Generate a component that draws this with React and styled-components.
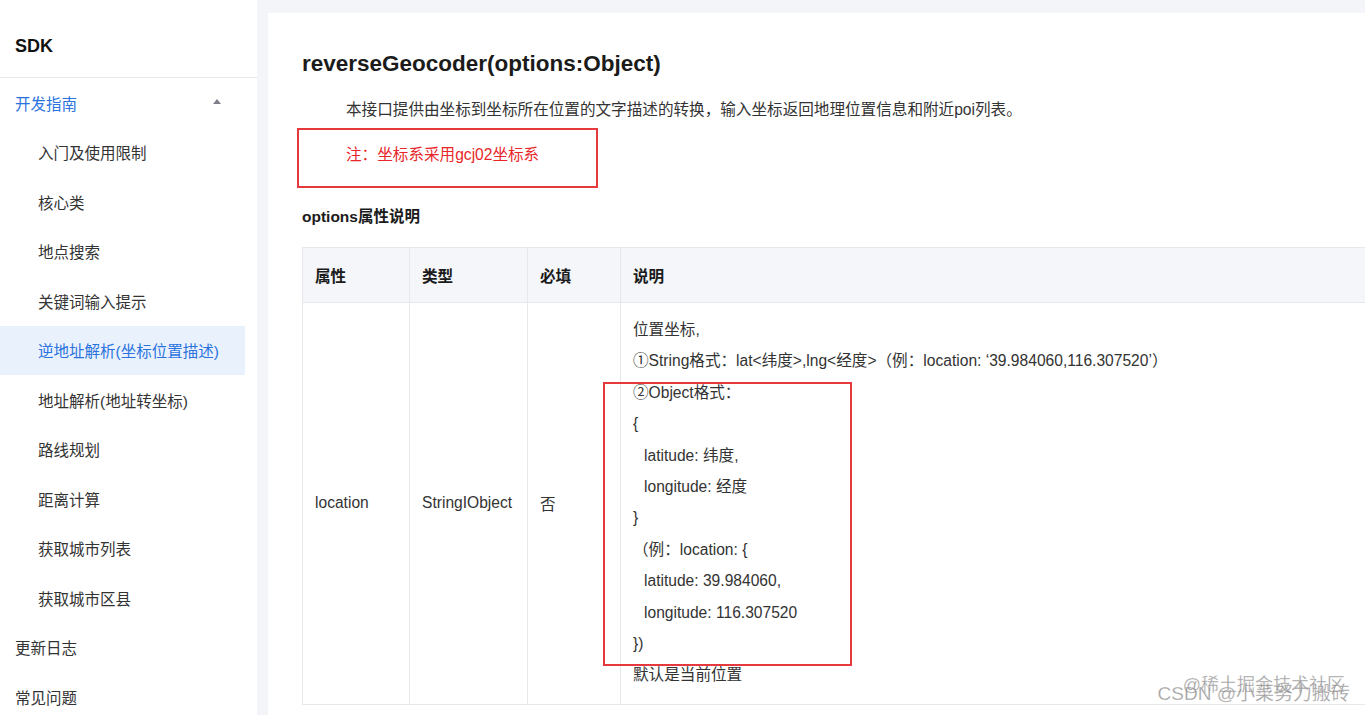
import React from "react";
import styled, { createGlobalStyle } from "styled-components";

const GlobalStyle = createGlobalStyle`
  html, body {
    margin: 0;
    padding: 0;
    overflow: hidden;
    background: #fff;
  }
  body {
    font-family: "Liberation Sans", "Noto Sans CJK SC", sans-serif;
    color: #333;
  }
`;

const Page = styled.div`
  display: flex;
  width: 1365px;
  height: 715px;
  overflow: hidden;
  position: relative;
`;

// ---------- sidebar ----------
const Sidebar = styled.aside`
  width: 257px;
  flex-shrink: 0;
  background: #fff;
  display: flex;
  flex-direction: column;
  overflow: hidden;
`;

const Brand = styled.div`
  flex-shrink: 0;
  height: 78px;
  display: flex;
  align-items: center;
  padding: 16px 0 0 15px;
  font-size: 18px;
  font-weight: bold;
  color: #111;
  border-bottom: 1px solid #e6e8eb;
  box-sizing: border-box;
`;

const Menu = styled.ul`
  list-style: none;
  margin: 0;
  padding: 0;
  width: 245px;
  flex-shrink: 0;
`;

const MenuItem = styled.li`
  height: 49.5px;
  display: flex;
  align-items: center;
  justify-content: space-between;
  padding-left: ${(p) => (p.$sub ? "38px" : "15px")};
  padding-right: 24px;
  font-size: 15.5px;
  color: ${(p) => (p.$blue || p.$active ? "#2a73de" : "#333")};
  background: ${(p) => (p.$active ? "#e9f1fd" : "transparent")};
  box-sizing: border-box;
`;

const Caret = styled.span`
  width: 0;
  height: 0;
  border-left: 4.5px solid transparent;
  border-right: 4.5px solid transparent;
  border-bottom: 5px solid #7d8089;
  margin-top: -2px;
`;

// ---------- main ----------
const Main = styled.main`
  flex: 1;
  background: #f3f5f8;
  padding: 13px 0 0 11px;
  overflow: hidden;
`;

const Panel = styled.section`
  background: #fff;
  height: 100%;
  padding: 0 0 0 34px;
  box-sizing: border-box;
  overflow: hidden;
`;

const Title = styled.h1`
  margin: 0;
  padding-top: 37px;
  font-size: 22.5px;
  line-height: 28px;
  font-weight: bold;
  color: #1b1b1b;
  white-space: nowrap;
`;

const Para = styled.p`
  margin: 0;
  padding-left: 44px;
  font-size: 15.6px;
  line-height: 22px;
  color: ${(p) => (p.$note ? "#e8262a" : "#333")};
  margin-top: ${(p) => p.$top || "0"};
  white-space: nowrap;
`;

const SubTitle = styled.h3`
  margin: 40px 0 0;
  font-size: 15.5px;
  line-height: 22px;
  font-weight: bold;
  color: #1b1b1b;
`;

const Table = styled.table`
  margin-top: 19px;
  border-collapse: collapse;
  table-layout: fixed;
  width: 1100px;
  font-size: 15.6px;
  color: #333;
`;

const Th = styled.th`
  height: 55px;
  box-sizing: border-box;
  background: #f4f6f9;
  border: 1px solid #e6e8ec;
  text-align: left;
  padding: 0 12px;
  font-weight: bold;
  color: #1b1b1b;
`;

const Td = styled.td`
  border: 1px solid #e6e8ec;
  padding: ${(p) => (p.$desc ? "11px 12px 13px" : "0 12px")};
  vertical-align: middle;
  text-align: left;
`;

const Line = styled.div`
  line-height: 31.4px;
  padding-left: ${(p) => (p.$indent ? "11px" : "0")};
  white-space: nowrap;
`;

// ---------- overlays ----------
const RedBox = styled.div`
  position: absolute;
  border: 2.5px solid #e5393d;
  box-sizing: border-box;
  pointer-events: none;
`;

const Watermark = styled.div`
  position: absolute;
  right: ${(p) => p.$right};
  bottom: ${(p) => p.$bottom};
  font-size: ${(p) => p.$size};
  line-height: 1;
  color: rgba(125, 125, 125, 0.7);
  -webkit-text-stroke: 0.3px rgba(255, 255, 255, 0.6);
  white-space: nowrap;
  font-family: "Liberation Sans", "Noto Sans CJK SC", sans-serif;
`;

const subItems = [
  "入门及使用限制",
  "核心类",
  "地点搜索",
  "关键词输入提示",
  "逆地址解析(坐标位置描述)",
  "地址解析(地址转坐标)",
  "路线规划",
  "距离计算",
  "获取城市列表",
  "获取城市区县",
];

const descLines = [
  { t: "位置坐标," },
  { t: "①String格式：lat<纬度>,lng<经度>（例：location: ‘39.984060,116.307520’）" },
  { t: "②Object格式：" },
  { t: "{" },
  { t: "latitude: 纬度,", indent: true },
  { t: "longitude: 经度", indent: true },
  { t: "}" },
  { t: "（例：location: {" },
  { t: "latitude: 39.984060,", indent: true },
  { t: "longitude: 116.307520", indent: true },
  { t: "})" },
  { t: "默认是当前位置" },
];

export default function App() {
  return (
    <>
      <GlobalStyle />
      <Page>
        <Sidebar>
          <Brand>SDK</Brand>
          <Menu>
            <MenuItem $blue>
              开发指南
              <Caret />
            </MenuItem>
            {subItems.map((s) => (
              <MenuItem key={s} $sub $active={s.startsWith("逆地址")}>
                {s}
              </MenuItem>
            ))}
            <MenuItem>更新日志</MenuItem>
            <MenuItem>常见问题</MenuItem>
          </Menu>
        </Sidebar>
        <Main>
          <Panel>
            <Title>reverseGeocoder(options:Object)</Title>
            <Para $top="21px">
              本接口提供由坐标到坐标所在位置的文字描述的转换，输入坐标返回地理位置信息和附近poi列表。
            </Para>
            <Para $note $top="23px">
              注：坐标系采用gcj02坐标系
            </Para>
            <SubTitle>options属性说明</SubTitle>
            <Table>
              <colgroup>
                <col style={{ width: 107 }} />
                <col style={{ width: 118 }} />
                <col style={{ width: 93 }} />
                <col />
              </colgroup>
              <thead>
                <tr>
                  <Th>属性</Th>
                  <Th>类型</Th>
                  <Th>必填</Th>
                  <Th>说明</Th>
                </tr>
              </thead>
              <tbody>
                <tr>
                  <Td>location</Td>
                  <Td>StringIObject</Td>
                  <Td>否</Td>
                  <Td $desc>
                    {descLines.map((l, i) => (
                      <Line key={i} $indent={l.indent}>
                        {l.t}
                      </Line>
                    ))}
                  </Td>
                </tr>
              </tbody>
            </Table>
          </Panel>
        </Main>
        <RedBox style={{ left: 297, top: 128, width: 301, height: 60 }} />
        <RedBox style={{ left: 603, top: 382, width: 249, height: 284 }} />
        <Watermark $right="20px" $bottom="21px" $size="18px">
          @稀土掘金技术社区
        </Watermark>
        <Watermark $right="15px" $bottom="12px" $size="19px">
          CSDN @小菜努力搬砖
        </Watermark>
      </Page>
    </>
  );
}
